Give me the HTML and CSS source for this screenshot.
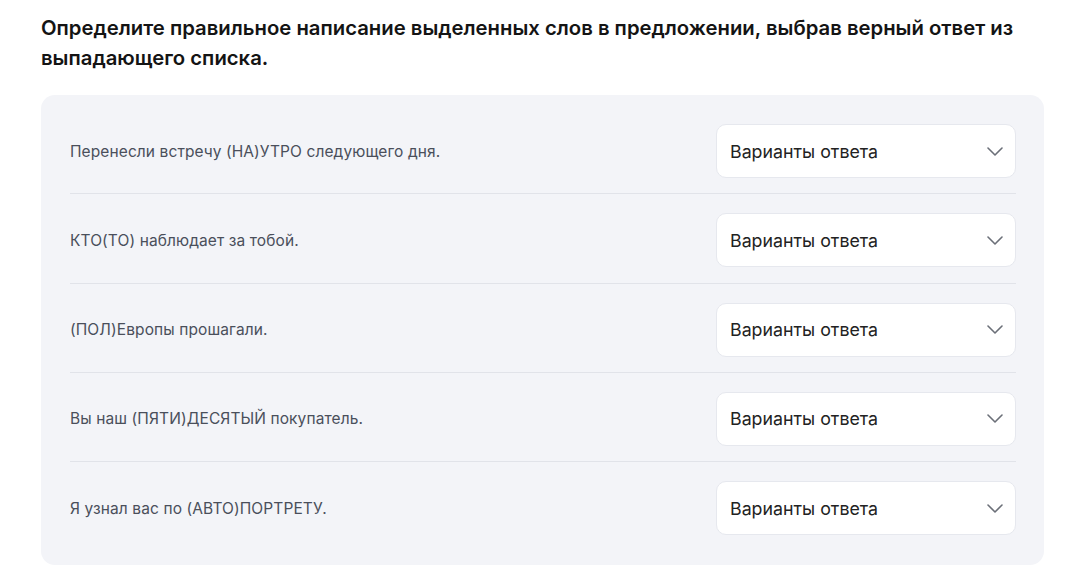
FILE: index.html
```html
<!DOCTYPE html>
<html lang="ru">
<head>
    <meta charset="UTF-8">
    <title>Задание</title>
    <link rel="stylesheet" href="styles.css">
</head>
<body>
    <div class="task">
        <h2 class="task-title">Определите правильное написание выделенных слов в предложении, выбрав верный ответ из выпадающего списка.</h2>
        <div class="task-card">
            <div class="row">
                <p class="row-text">Перенесли встречу (НА)УТРО следующего дня.</p>
                <div class="select">
                    <span>Варианты ответа</span>
                    <svg class="chevron" width="16" height="9" viewBox="0 0 16 9"><path d="M1 1l7 7 7-7" fill="none" stroke="#6b6f78" stroke-width="1.6" stroke-linecap="round" stroke-linejoin="round"/></svg>
                </div>
            </div>
            <div class="row">
                <p class="row-text">КТО(ТО) наблюдает за тобой.</p>
                <div class="select">
                    <span>Варианты ответа</span>
                    <svg class="chevron" width="16" height="9" viewBox="0 0 16 9"><path d="M1 1l7 7 7-7" fill="none" stroke="#6b6f78" stroke-width="1.6" stroke-linecap="round" stroke-linejoin="round"/></svg>
                </div>
            </div>
            <div class="row">
                <p class="row-text">(ПОЛ)Европы прошагали.</p>
                <div class="select">
                    <span>Варианты ответа</span>
                    <svg class="chevron" width="16" height="9" viewBox="0 0 16 9"><path d="M1 1l7 7 7-7" fill="none" stroke="#6b6f78" stroke-width="1.6" stroke-linecap="round" stroke-linejoin="round"/></svg>
                </div>
            </div>
            <div class="row">
                <p class="row-text">Вы наш (ПЯТИ)ДЕСЯТЫЙ покупатель.</p>
                <div class="select">
                    <span>Варианты ответа</span>
                    <svg class="chevron" width="16" height="9" viewBox="0 0 16 9"><path d="M1 1l7 7 7-7" fill="none" stroke="#6b6f78" stroke-width="1.6" stroke-linecap="round" stroke-linejoin="round"/></svg>
                </div>
            </div>
            <div class="row">
                <p class="row-text">Я узнал вас по (АВТО)ПОРТРЕТУ.</p>
                <div class="select">
                    <span>Варианты ответа</span>
                    <svg class="chevron" width="16" height="9" viewBox="0 0 16 9"><path d="M1 1l7 7 7-7" fill="none" stroke="#6b6f78" stroke-width="1.6" stroke-linecap="round" stroke-linejoin="round"/></svg>
                </div>
            </div>
        </div>
    </div>
</body>
</html>
```

FILE: styles.css
```css
* {
    margin: 0;
    padding: 0;
    box-sizing: border-box;
}

body {
    background: #fff;
    font-family: Inter, "Noto Sans", sans-serif;
    color: #1a1a1a;
}

.task {
    width: 1003px;
    margin-left: 41px;
    padding-top: 13px;
}

.task-title {
    font-size: 20.3px;
    font-weight: 600;
    line-height: 30px;
    color: #141414;
}

.task-card {
    margin-top: 22px;
    background: #f3f4f8;
    border-radius: 14px;
    padding: 29px 28px 30px 29px;
}

.row {
    display: flex;
    align-items: center;
    justify-content: space-between;
}

.row:not(:last-child) {
    padding-bottom: 15.25px;
    border-bottom: 1px solid #e1e3e9;
}

.row + .row {
    padding-top: 19px;
}

.row-text {
    font-size: 15.5px;
    color: #4a4f5b;
    letter-spacing: 0.1px;
}

.select {
    width: 300px;
    height: 54px;
    background: #fff;
    border: 1px solid #e6e8ee;
    border-radius: 10px;
    display: flex;
    align-items: center;
    justify-content: space-between;
    padding: 0 12px 0 13px;
    font-size: 17.8px;
    color: #222;
}
```
